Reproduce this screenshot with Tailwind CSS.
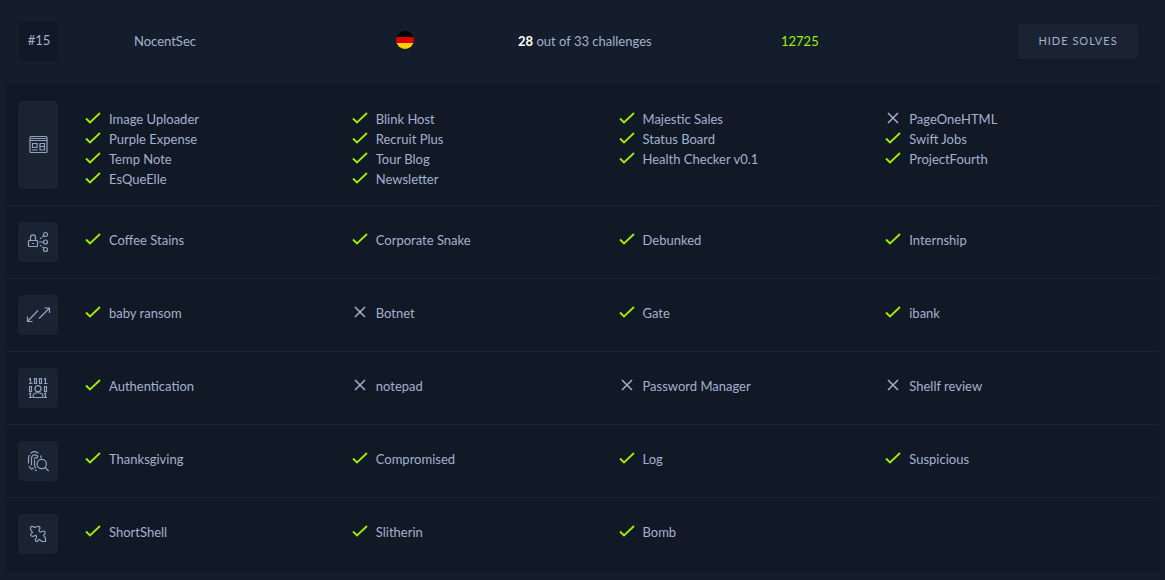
<!DOCTYPE html>
<html lang="en">
<head>
<meta charset="utf-8">
<meta name="viewport" content="width=device-width, initial-scale=1">
<title>Scoreboard</title>
<script src="https://cdn.jsdelivr.net/npm/@tailwindcss/browser@4"></script>
</head>
<body class="min-h-screen bg-[#141d2b] font-['Lato',sans-serif] text-[13px] leading-5 text-[#a4b1cd]">
<svg class="hidden" aria-hidden="true">
  <symbol id="yes" viewBox="0 0 16 20"><path d="M1 9.500 5 13.500 15 4" fill="none" stroke="#9fef00" stroke-width="1.800"/></symbol>
  <symbol id="no" viewBox="0 0 16 20"><path d="M3 4 13 14M13 4 3 14" fill="none" stroke="#a4b1cd" stroke-width="1.500"/></symbol>
</svg>
<main class="px-[5px] pb-2">
  <header class="grid h-[84px] grid-cols-[115fr_262fr_122fr_263fr_357fr] items-center pr-[22px] pb-0.5 pl-3.5">
    <span class="flex size-10 items-center justify-center rounded bg-[#111927] pb-0.5">#15</span>
    <span>NocentSec</span>
    <svg class="mb-0.5 size-[18px]" viewBox="0 0 18 18" role="img" aria-label="Germany"><clipPath id="disc"><circle cx="9" cy="9" r="9"/></clipPath><g clip-path="url(#disc)"><path fill="#000" d="M0 0h18v6H0z"/><path fill="#d00" d="M0 6h18v6H0z"/><path fill="#ffce00" d="M0 12h18v6H0z"/></g></svg>
    <span class="whitespace-nowrap"><b class="text-white">28</b> out of 33 challenges</span>
    <div class="flex items-center justify-between">
      <span class="text-[#9fef00]">12725</span>
      <button type="button" class="h-9 w-[120px] rounded bg-[#1a2332] text-[11px] tracking-[1px] shadow-md">HIDE SOLVES</button>
    </div>
  </header>
  <div id="solves" class="rounded-sm bg-[#111927] px-px pt-px pb-0.5"></div>
</main>
<template id="row">
  <section class="flex gap-6 border-b border-[#1a2332] py-4 pr-[7px] pl-3 last:border-b-0">
    <div class="flex min-h-10 w-10 shrink-0 items-center justify-center rounded bg-[#1a2332]"><svg class="size-6 overflow-visible" viewBox="0 0 24 24" fill="none" stroke="#96a2bd" stroke-width="1.200" aria-hidden="true"></svg></div>
    <div class="grid flex-1 grid-cols-4 pt-2 pl-[3px]"></div>
  </section>
</template>
<template id="item"><li class="flex gap-2"><svg class="h-5 w-4 shrink-0" role="img"><use/></svg><span></span></li></template>
<script>
const rows = [
  ['<rect x="4" y="3.500" width="17" height="16" rx="1"/><path d="M4 7.500h17M5 5.500h15" /><path d="M6.500 10.500h4.500v4H6.500zM6 17h5.500M14 10.500h4.500V17H14zM14 13.500h4.500"/>',
    [['Image Uploader','Purple Expense','Temp Note','EsQueElle'],['Blink Host','Recruit Plus','Tour Blog','Newsletter'],['Majestic Sales','Status Board','Health Checker v0.1'],['!PageOneHTML','Swift Jobs','ProjectFourth']]],
  ['<rect x="2.500" y="10.500" width="9" height="6" rx=".5"/><path d="M4.500 10.500V7.500a2.500 2.700 0 0 1 5 0v3M6 13.500h2M13 12h4.500M14 8.700l1.500-1M16.300 7l1.500-1M14 15.300l1.500 1M16.300 17l1.500 1"/><circle cx="19.500" cy="4.500" r="2"/><circle cx="19.500" cy="12" r="2"/><circle cx="19.500" cy="19.500" r="2"/>',
    [['Coffee Stains'],['Corporate Snake'],['Debunked'],['Internship']]],
  ['<path d="M12 7.500 1.500 18.500M1.500 13.500v5h5M13 15.500 23.500 5M18.500 5h5v5"/>',
    [['baby ransom'],['!Botnet'],['Gate'],['ibank']]],
  ['<path d="M3 3.500 4.500 2.500V8M3 7.500h3.500M18 3.500l1.500-1V8M18 7.500h3.500M3 18l1.500-1v5M3 21.500h3M18 18l1.500-1v5M18 21.500h3"/><path d="M8.500 2.500h2v5h-2zM13.500 2.500h2v5h-2zM3.500 10.500h2v5h-2zM18.500 10.500h2v5h-2z"/><circle cx="12" cy="12.700" r="3"/><path d="M7 21.500v-1c0-5 10-5 10 0v1z"/>',
    [['Authentication'],['!notepad'],['!Password Manager'],['!Shellf review']]],
  ['<path d="M4.500 4.500C6.500 2 10.500 2 12.500 4.500M2.500 14.500V9.500C2.500 8 3 7 3.500 6M3 17c.5 1.500 1.500 2.500 3 3.500M5.500 16.500V10C5.500 5 11 4.500 12 8.500M8.500 10.500V16c0 1.500.5 2.500 1.500 3.500M8.500 10c0-2 2.500-2 2.500 0M6 18.500l1.500 2M9 21.500h2M14.500 6.500c.5 1 .7 2 .7 3"/><circle cx="15.700" cy="15" r="4.700"/><path d="m19 18.500 3.700 3.500"/>',
    [['Thanksgiving'],['Compromised'],['Log'],['Suspicious']]],
  ['<path d="M8.500 5.500C10 5.500 10 4.500 11.500 4.500C14 4 14.500 6 13.500 7C12.500 8.500 13 10 14.500 10C16 10 16 8.800 17.500 9C20 9.500 19.500 12 18 12.500C16.500 13.500 19.500 14.500 19.500 16.500V19.500H16.500C14.500 19.500 14 17 12.700 17.500C11.700 18 12.700 19.500 10.800 19.500C9 19.500 9 17.500 10 16.500C11.500 14.500 10 13 8.500 13.700C7.500 14.500 6.500 14.500 5.500 14C4 13 4.500 11.500 6 11C7.500 10 4.500 9 4.500 7V5.500C4.500 4 7 4 8.500 5.500z"/>',
    [['ShortShell'],['Slitherin'],['Bomb']]]
];
const rowTpl = document.getElementById('row'), itemTpl = document.getElementById('item');
for (const [icon, columns] of rows) {
  const row = rowTpl.content.cloneNode(true);
  row.querySelector('svg').innerHTML = icon;
  for (const names of columns) {
    const list = document.createElement('ul');
    for (const name of names) {
      const li = itemTpl.content.cloneNode(true), missed = name[0] === '!';
      li.querySelector('use').setAttribute('href', missed ? '#no' : '#yes');
      li.querySelector('svg').setAttribute('aria-label', missed ? 'Unsolved' : 'Solved');
      li.querySelector('span').textContent = missed ? name.slice(1) : name;
      list.append(li);
    }
    row.querySelector('.grid').append(list);
  }
  document.getElementById('solves').append(row);
}
</script>
</body>
</html>
